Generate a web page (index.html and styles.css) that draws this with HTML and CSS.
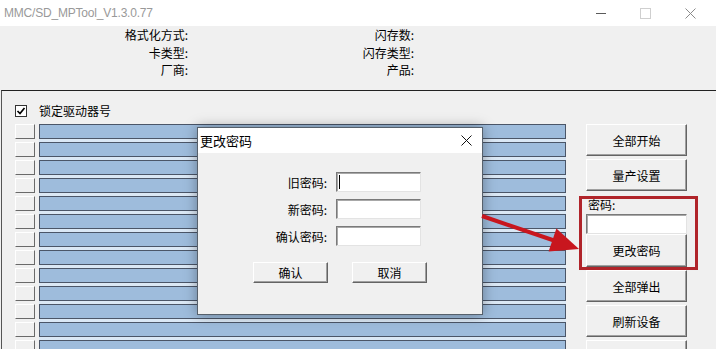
FILE: index.html
```html
<!DOCTYPE html>
<html lang="zh-CN">
<head>
    <meta charset="UTF-8">
    <title>MMC/SD_MPTool_V1.3.0.77</title>
    <link rel="stylesheet" href="styles.css">
</head>
<body>
    <div class="window">
        <div class="titlebar">
            <span class="title">MMC/SD_MPTool_V1.3.0.77</span>
            <div class="controls">
                <span class="ctl"><svg width="10" height="1"><rect width="10" height="1" fill="#5a5a5a"/></svg></span>
                <span class="ctl"><svg width="11" height="11"><rect x="0.5" y="0.5" width="10" height="10" fill="none" stroke="#cfcfcf"/></svg></span>
                <span class="ctl"><svg width="11" height="11"><path d="M0.5 0.5 L10.5 10.5 M10.5 0.5 L0.5 10.5" stroke="#8a8a8a" stroke-width="1"/></svg></span>
            </div>
        </div>

        <div class="info">
            <span>格式化方式:</span><span>闪存数:</span>
            <span>卡类型:</span><span>闪存类型:</span>
            <span>厂商:</span><span>产品:</span>
        </div>

        <div class="panel">
            <div class="devices">
                <div class="lock">
                    <span class="check"><svg width="10" height="10"><path d="M1.5 5 L4 7.5 L8.5 2" fill="none" stroke="#000" stroke-width="1.7"/></svg></span>
                    锁定驱动器号
                </div>
                <div class="ports">
                    <div class="port"><span class="slot"></span><span class="bar"></span></div>
                    <div class="port"><span class="slot"></span><span class="bar"></span></div>
                    <div class="port"><span class="slot"></span><span class="bar"></span></div>
                    <div class="port"><span class="slot"></span><span class="bar"></span></div>
                    <div class="port"><span class="slot"></span><span class="bar"></span></div>
                    <div class="port"><span class="slot"></span><span class="bar"></span></div>
                    <div class="port"><span class="slot"></span><span class="bar"></span></div>
                    <div class="port"><span class="slot"></span><span class="bar"></span></div>
                    <div class="port"><span class="slot"></span><span class="bar"></span></div>
                    <div class="port"><span class="slot"></span><span class="bar"></span></div>
                    <div class="port"><span class="slot"></span><span class="bar"></span></div>
                    <div class="port"><span class="slot"></span><span class="bar"></span></div>
                    <div class="port"><span class="slot"></span><span class="bar"></span></div>
                </div>
            </div>

            <div class="actions">
                <button class="btn">全部开始</button>
                <button class="btn">量产设置</button>
                <div class="pwd">
                    <div class="pwd-label">密码:</div>
                    <div class="field"></div>
                    <button class="btn">更改密码</button>
                </div>
                <button class="btn">全部弹出</button>
                <button class="btn">刷新设备</button>
                <button class="btn"></button>
            </div>
        </div>

        <div class="dialog">
            <div class="dialog-title">
                更改密码
                <svg class="dialog-close" width="11" height="11"><path d="M0.5 0.5 L10.5 10.5 M10.5 0.5 L0.5 10.5" stroke="#111" stroke-width="1"/></svg>
            </div>
            <div class="dialog-form">
                <span>旧密码:</span><div class="field"><span class="caret"></span></div>
                <span>新密码:</span><div class="field"></div>
                <span>确认密码:</span><div class="field"></div>
            </div>
            <div class="dialog-buttons">
                <button class="btn">确认</button>
                <button class="btn">取消</button>
            </div>
        </div>

        <svg class="arrow" viewBox="470 200 120 70" width="120" height="70">
            <line x1="482" y1="216" x2="557" y2="241.5" stroke="#c8161e" stroke-width="4"/>
            <polygon points="579,249 556.4,228.6 548.6,251.4" fill="#c8161e"/>
        </svg>
    </div>
</body>
</html>
```

FILE: styles.css
```css
body { margin: 0; background: #fff; font-family: "Noto Sans CJK SC", "Noto Sans", sans-serif; font-size: 12px; color: #000; }

.window { position: relative; width: 716px; height: 349px; overflow: hidden; background: #f0f0f0; }

.titlebar { display: flex; align-items: center; height: 26px; background: #fff; }
.title { padding-left: 4px; font-family: "Liberation Sans", sans-serif; font-size: 12px; letter-spacing: -0.2px; color: #999; }
.controls { display: flex; margin-left: auto; padding-right: 3px; }
.ctl { display: flex; align-items: center; justify-content: center; width: 45px; height: 26px; }

.info { display: grid; grid-template-columns: 188px 226px; grid-auto-rows: 17.5px; line-height: 17.5px; height: 64px; text-align: right; }

.panel { display: flex; margin-left: 1px; border-top: 1px solid #222; border-left: 1px solid #555; height: 300px; }

.devices { padding-left: 13px; }
.lock { display: flex; align-items: center; height: 15px; margin-top: 12px; }
.check { display: flex; align-items: center; justify-content: center; width: 12px; height: 12px; margin-right: 12px; box-sizing: border-box; border: 1px solid #333; background: #fff; }
.ports { display: flex; flex-direction: column; gap: 3px; margin-top: 6px; }
.port { display: flex; height: 15px; }
.slot { width: 20px; height: 15px; box-sizing: border-box; background: #f0f0f0; border: 1px solid; border-color: #fff #6a6a6a #6a6a6a #fff; }
.bar { width: 527px; margin-left: 4px; box-sizing: border-box; border: 1px solid #4b5668; background: #9ebcdc; box-shadow: 0 3px 0 #dbe8f5; }

.actions { display: flex; flex-direction: column; gap: 3px; width: 101px; margin-left: 20px; margin-top: 33px; }

.btn { display: flex; align-items: center; justify-content: center; width: 100%; height: 32px; padding: 0; box-sizing: border-box; background: #f0f0f0; border: 1px solid; border-color: #fff #646464 #646464 #fff; box-shadow: inset -1px -1px #a0a0a0; font-family: inherit; font-size: 12px; color: #000; }

.field { box-sizing: border-box; height: 20px; background: #fff; border: 1px solid; border-color: #7a7a7a #e3e3e3 #e3e3e3 #7a7a7a; box-shadow: inset 1px 1px #a8a8a8; }
.caret { display: block; width: 1px; height: 14px; margin: 2px 0 0 2px; background: #000; }

.pwd { position: relative; }
.pwd-label { height: 20px; box-sizing: border-box; padding: 3px 0 0 2px; line-height: 16px; }
.pwd .btn { height: 33px; }
.pwd::after { content: ""; position: absolute; top: 2px; bottom: -3px; left: -7px; right: -11px; border: 3px solid #b0242a; }

.dialog { position: absolute; left: 197px; top: 127px; width: 286px; height: 188px; box-sizing: border-box; border: 1px solid #56606b; background: #f0f0f0; box-shadow: 0 0 12px rgba(0, 0, 0, 0.35); }
.dialog-title { display: flex; align-items: center; height: 25px; padding-left: 2px; background: #fff; font-size: 13px; }
.dialog-close { margin-left: auto; margin-right: 10px; }
.dialog-form { display: grid; grid-template-columns: 129px 85px; grid-auto-rows: 20px; column-gap: 9px; row-gap: 7px; align-items: center; padding-top: 19px; }
.dialog-form span { text-align: right; }
.dialog-buttons { display: flex; gap: 24px; margin-top: 16px; padding-left: 55px; }
.dialog-buttons .btn { width: 75px; height: 21px; }

.arrow { position: absolute; left: 470px; top: 200px; }
```
